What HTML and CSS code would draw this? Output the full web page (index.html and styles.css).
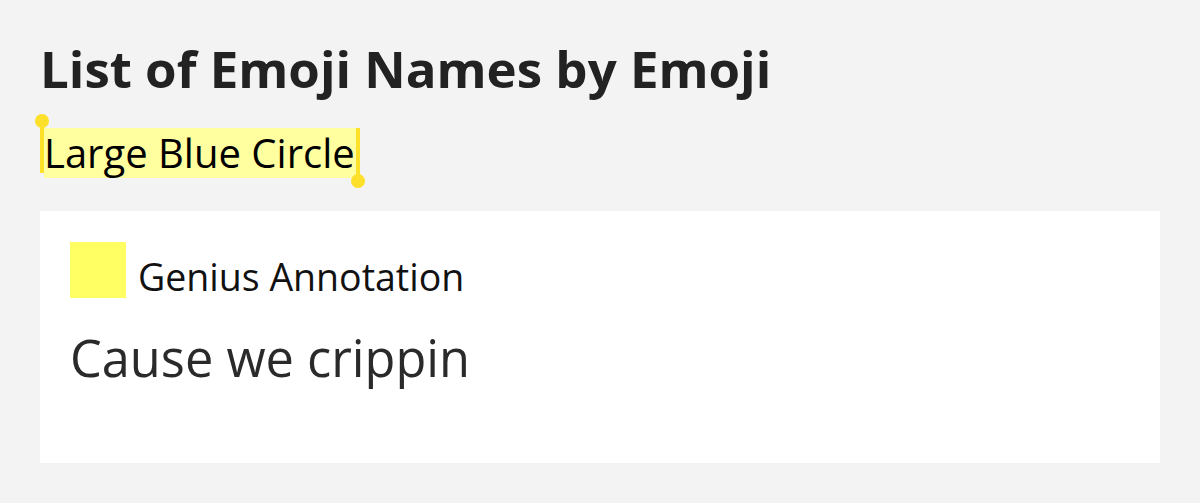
FILE: index.html
```html
<!DOCTYPE html>
<html>
<head>
<meta charset="utf-8">
<link rel="stylesheet" href="styles.css">
</head>
<body>
<main class="page">
  <h1 class="title">List of Emoji Names by Emoji</h1>
  <div class="lyric-row">
    <span class="highlight">Large Blue Circle<span class="handle handle-start"></span><span class="handle handle-end"></span></span>
  </div>
  <section class="card">
    <div class="card-head">
      <span class="swatch"></span>
      <span class="label">Genius Annotation</span>
    </div>
    <p class="body">Cause we crippin</p>
  </section>
</main>
</body>
</html>
```
FILE: styles.css
```css
html, body {
  margin: 0;
  padding: 0;
  background: #f3f3f3;
}
.page {
  padding: 33px 40px 40px 40px;
  font-family: "Open Sans", "Liberation Sans", sans-serif;
  color: #222;
}
.title {
  margin: 0;
  font-size: 51px;
  font-weight: 700;
  line-height: 70px;
}
.lyric-row {
  margin-top: 25px;
  height: 50px;
}
.highlight {
  position: relative;
  display: inline-block;
  margin-left: 4px;
  padding: 0 1px 0 0;
  background: #ffffa0;
  color: #000;
  font-size: 40px;
  line-height: 50px;
}
.handle {
  position: absolute;
  width: 4px;
  background: #fde02a;
}
.handle::after {
  content: "";
  position: absolute;
  width: 14px;
  height: 14px;
  border-radius: 50%;
  background: #fde02a;
  left: -5px;
}
.handle-start {
  left: -4px;
  top: -7px;
  height: 52px;
}
.handle-start::after { top: -7px; }
.handle-end {
  right: -4px;
  top: 0;
  height: 53px;
}
.handle-end::after { bottom: -7px; }
.card {
  margin-top: 33px;
  background: #fff;
  padding: 31px 30px 30px 30px;
  box-sizing: border-box;
  height: 252px;
}
.card-head {
  display: flex;
  align-items: flex-start;
  gap: 12px;
}
.swatch {
  width: 56px;
  height: 56px;
  background: #ffff64;
}
.label {
  font-size: 37.5px;
  line-height: 56px;
  padding-top: 7px;
  color: #111;
}
.body {
  margin: 18px 0 0 0;
  font-size: 50.5px;
  font-weight: 400;
  color: #2a2a2a;
  line-height: 70px;
}
```
